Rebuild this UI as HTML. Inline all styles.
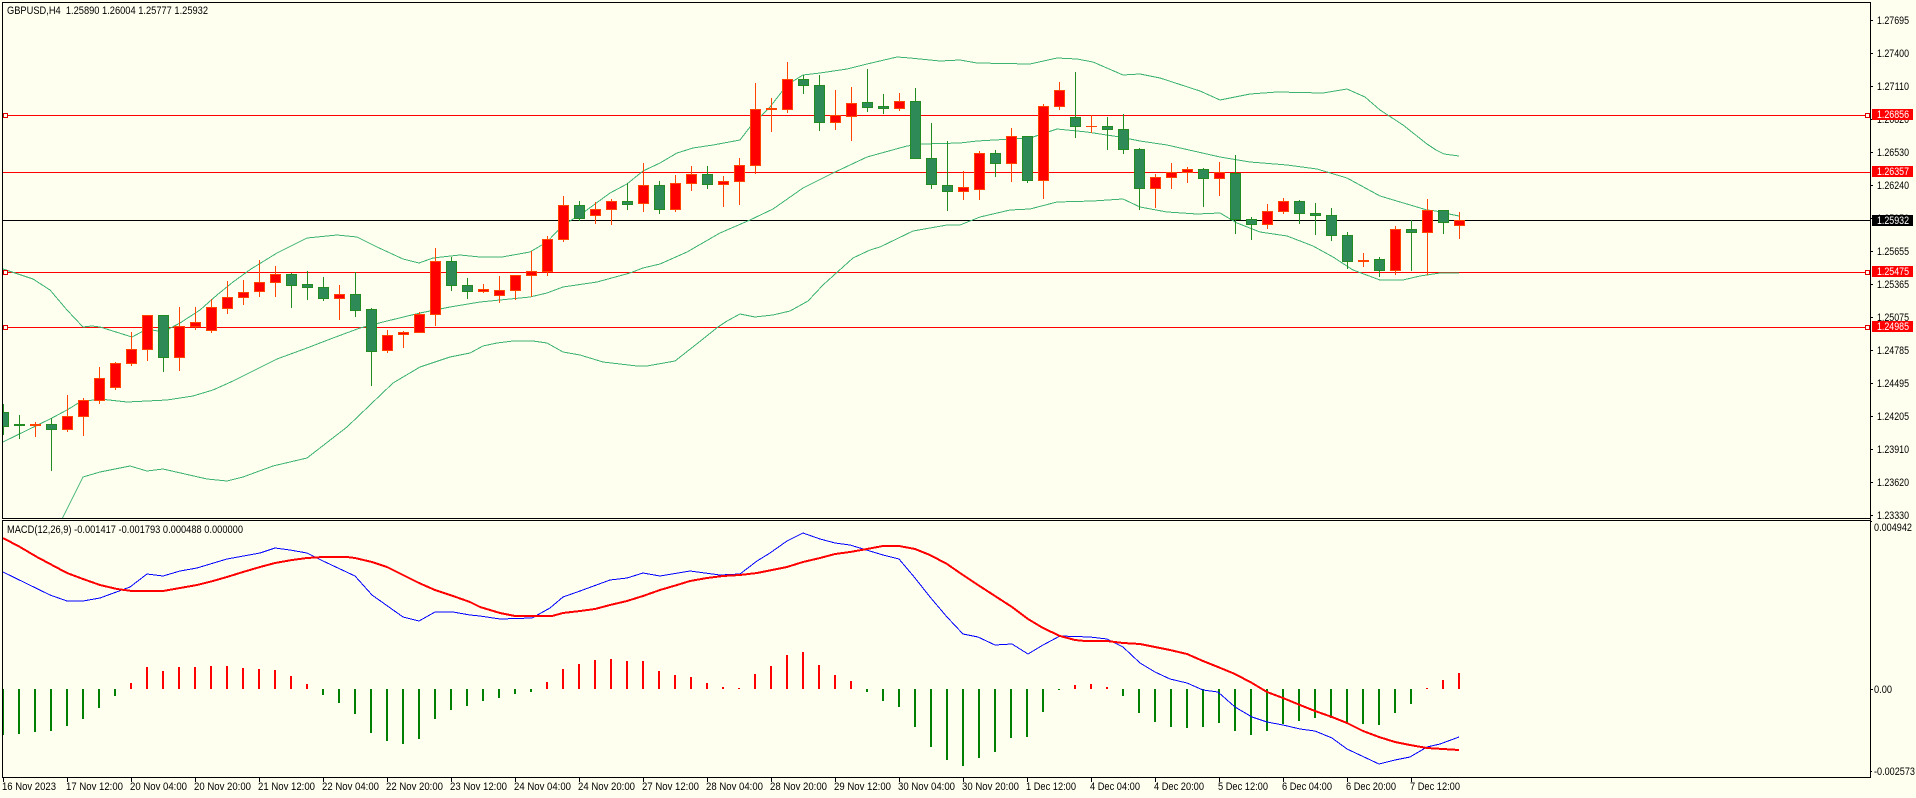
<!DOCTYPE html>
<html><head><meta charset="utf-8"><title>GBPUSD,H4</title>
<style>
html,body{margin:0;padding:0;background:#fffff0;width:1916px;height:798px;overflow:hidden}
svg{display:block}
text{font-family:"Liberation Sans",sans-serif;font-size:11px;fill:#000;white-space:pre}
.w{fill:#fff}
</style></head><body>
<svg width="1916" height="798" viewBox="0 0 1916 798" xmlns="http://www.w3.org/2000/svg" lengthAdjust="spacingAndGlyphs">
<defs><clipPath id="m"><rect x="3" y="3" width="1867" height="515"/></clipPath><clipPath id="n"><rect x="3" y="521" width="1867" height="256"/></clipPath></defs>
<rect width="1916" height="798" fill="#fffff0"/>
<g shape-rendering="crispEdges" clip-path="url(#m)">
<path d="M3 115.5H1870M3 172.5H1870M3 272.5H1870M3 327.5H1870" stroke="#f00" fill="none"/>
<path d="M3 220.5H1870" stroke="#000" fill="none"/>
<g fill="none" stroke="#3cb371">
<polyline points="3,269 33,279 50,290 67,310 83,327 92,326 100,327 132,337 147,329 163,332 180,323 200,310 217,295 233,282 251,269 277,253 307,238 337,235 357,237 377,247 403,259 419,263 433,258 460,255 480,257 502,257 530,252 547,242 563,225 580,215 610,193 627,184 643,171 660,163 677,153 693,148 713,145 740,140 750,127 770,107 787,85 803,75 820,73 847,69 867,64 897,57 910,58 940,61 960,60 977,63 1030,64 1057,58 1077,59 1093,62 1123,75 1140,74 1160,78 1200,91 1220,100 1250,94 1277,92 1323,93 1347,89 1365,97 1380,110 1403,125 1427,144 1436,150 1444,154 1459,156"/>
<polyline points="3,442 50,419 67,410 80,402 100,399 127,402 167,400 193,396 213,390 233,381 277,359 307,348 333,338 360,328 383,322 420,313 450,307 480,302 530,297 547,293 563,287 597,282 630,273 643,268 660,264 687,252 720,233 750,220 773,209 803,188 833,173 867,157 907,146 923,144 960,143 977,141 1030,138 1057,129 1087,132 1120,137 1140,141 1167,145 1220,157 1250,162 1287,165 1317,169 1347,178 1380,196 1427,210 1436,211 1444,213 1459,216"/>
<polyline points="50,545 63,517 83,477 100,472 130,466 147,471 163,469 207,479 227,481 243,477 273,466 307,458 347,427 393,383 420,367 450,357 470,353 483,346 497,343 513,341 533,341 547,343 563,352 580,355 603,362 637,366 647,366 675,361 703,339 718,327 727,321 740,314 755,317 773,315 790,311 808,301 823,285 853,258 870,250 880,247 913,231 947,225 960,225 980,217 1010,210 1030,209 1057,202 1093,201 1123,199 1140,207 1167,212 1197,214 1220,213 1237,223 1260,232 1287,236 1313,246 1333,257 1353,270 1380,280 1403,280 1420,276 1440,273 1459,273"/>
</g>
<path fill="none" stroke="#228b22" d="M3.5 404V435M19.5 415V439M51.5 418V471M163.5 315V372M291.5 273V308M307.5 271V300M323.5 277V301M355.5 272V317M371.5 308V386M451.5 257V291M467.5 278V299M579.5 201V221M627.5 183V210M659.5 181V214M707.5 166V189M803.5 75V94M819.5 75V131M867.5 69V112M883.5 94V114M915.5 88V159M931.5 123V189M947.5 141V211M995.5 150V177M1027.5 136V183M1075.5 72V138M1107.5 117V150M1123.5 114V154M1139.5 148V210M1203.5 168V207M1235.5 155V234M1251.5 217V240M1299.5 200V224M1315.5 203V235M1331.5 208V241M1347.5 232V269M1379.5 257V277M1411.5 220V271M1443.5 210V234"/>
<path fill="#2e8b57" stroke="#228b22" d="M-1.5 412.5h10v14h-10zM14.5 424.5h10v1h-10zM46.5 424.5h10v5h-10zM158.5 315.5h10v42h-10zM286.5 274.5h10v11h-10zM302.5 284.5h10v3h-10zM318.5 287.5h10v11h-10zM350.5 294.5h10v16h-10zM366.5 309.5h10v42h-10zM446.5 261.5h10v24h-10zM462.5 285.5h10v6h-10zM574.5 205.5h10v13h-10zM622.5 201.5h10v3h-10zM654.5 185.5h10v24h-10zM702.5 174.5h10v10h-10zM798.5 79.5h10v6h-10zM814.5 85.5h10v37h-10zM862.5 102.5h10v5h-10zM878.5 106.5h10v2h-10zM910.5 101.5h10v57h-10zM926.5 158.5h10v26h-10zM942.5 185.5h10v6h-10zM990.5 153.5h10v10h-10zM1022.5 136.5h10v44h-10zM1070.5 117.5h10v9h-10zM1102.5 126.5h10v3h-10zM1118.5 129.5h10v20h-10zM1134.5 149.5h10v39h-10zM1198.5 169.5h10v9h-10zM1230.5 173.5h10v46h-10zM1246.5 219.5h10v5h-10zM1294.5 201.5h10v12h-10zM1310.5 213.5h10v2h-10zM1326.5 215.5h10v20h-10zM1342.5 235.5h10v26h-10zM1374.5 259.5h10v11h-10zM1406.5 229.5h10v3h-10zM1438.5 210.5h10v12h-10z"/>
<path fill="none" stroke="#ff4500" d="M35.5 422V437M67.5 395V432M83.5 398V436M99.5 367V404M115.5 362V390M131.5 332V366M147.5 315V361M179.5 307V371M195.5 307V330M211.5 299V333M227.5 281V314M243.5 280V305M259.5 260V297M275.5 266V297M339.5 285V320M387.5 330V353M403.5 331V348M419.5 312V333M435.5 248V326M483.5 284V293M499.5 276V303M515.5 275V300M531.5 251V297M547.5 236V276M563.5 196V242M595.5 202V224M611.5 199V225M643.5 163V212M675.5 175V212M691.5 166V191M723.5 176V207M739.5 158V205M755.5 83V174M771.5 98V132M787.5 62V113M835.5 90V130M851.5 87V141M899.5 93V111M963.5 171V200M979.5 151V200M1011.5 128V182M1043.5 104V199M1059.5 82V110M1091.5 115V133M1155.5 174V208M1171.5 163V189M1187.5 167V183M1219.5 162V196M1267.5 204V229M1283.5 198V214M1363.5 253V267M1395.5 226V275M1427.5 199V275M1459.5 212V239M1086 126.5H1097"/>
<path fill="#f00" stroke="#ff4500" d="M30.5 424.5h10v1h-10zM62.5 416.5h10v13h-10zM78.5 400.5h10v16h-10zM94.5 378.5h10v22h-10zM110.5 363.5h10v24h-10zM126.5 349.5h10v14h-10zM142.5 315.5h10v34h-10zM174.5 326.5h10v31h-10zM190.5 322.5h10v4h-10zM206.5 307.5h10v23h-10zM222.5 297.5h10v11h-10zM238.5 292.5h10v5h-10zM254.5 282.5h10v9h-10zM270.5 274.5h10v8h-10zM334.5 294.5h10v4h-10zM382.5 335.5h10v15h-10zM398.5 332.5h10v2h-10zM414.5 314.5h10v18h-10zM430.5 261.5h10v53h-10zM478.5 289.5h10v2h-10zM494.5 290.5h10v5h-10zM510.5 275.5h10v15h-10zM526.5 271.5h10v4h-10zM542.5 239.5h10v32h-10zM558.5 205.5h10v34h-10zM590.5 209.5h10v6h-10zM606.5 201.5h10v8h-10zM638.5 185.5h10v18h-10zM670.5 183.5h10v26h-10zM686.5 174.5h10v9h-10zM718.5 181.5h10v3h-10zM734.5 165.5h10v16h-10zM750.5 109.5h10v56h-10zM766.5 108.5h10v1h-10zM782.5 79.5h10v30h-10zM830.5 115.5h10v7h-10zM846.5 103.5h10v13h-10zM894.5 101.5h10v7h-10zM958.5 187.5h10v4h-10zM974.5 153.5h10v36h-10zM1006.5 136.5h10v27h-10zM1038.5 106.5h10v74h-10zM1054.5 90.5h10v16h-10zM1150.5 177.5h10v11h-10zM1166.5 172.5h10v5h-10zM1182.5 169.5h10v3h-10zM1214.5 172.5h10v6h-10zM1262.5 211.5h10v13h-10zM1278.5 201.5h10v10h-10zM1358.5 260.5h10v1h-10zM1390.5 229.5h10v41h-10zM1422.5 210.5h10v22h-10zM1454.5 220.5h10v5h-10z"/>
</g>
<g shape-rendering="crispEdges">
<rect x="3.5" y="113.5" width="4" height="4" fill="#fffff0" stroke="#e00000"/>
<rect x="3.5" y="270.5" width="4" height="4" fill="#fffff0" stroke="#e00000"/>
<rect x="3.5" y="325.5" width="4" height="4" fill="#fffff0" stroke="#e00000"/>
<rect x="1865.5" y="113.5" width="4" height="4" fill="#fffff0" stroke="#e00000"/>
<rect x="1865.5" y="270.5" width="4" height="4" fill="#fffff0" stroke="#e00000"/>
<rect x="1865.5" y="325.5" width="4" height="4" fill="#fffff0" stroke="#e00000"/>
</g>
<g shape-rendering="crispEdges" clip-path="url(#n)">
<path fill="none" stroke="#008000" stroke-width="2" d="M3 689V735M19 689V734M35 689V732M51 689V731M67 689V726M83 689V719M99 689V708M115 689V696M323 689V695M339 689V703M355 689V714M371 689V733M387 689V741M403 689V744M419 689V739M435 689V719M451 689V710M467 689V706M483 689V701M499 689V698M515 689V694M531 689V692M867 689V692M883 689V701M899 689V707M915 689V727M931 689V747M947 689V760M963 689V766M979 689V758M995 689V752M1011 689V738M1027 689V737M1043 689V712M1059 689V690M1123 689V696M1139 689V713M1155 689V722M1171 689V727M1187 689V728M1203 689V727M1219 689V723M1235 689V731M1251 689V735M1267 689V731M1283 689V724M1299 689V721M1315 689V718M1331 689V718M1347 689V724M1363 689V724M1379 689V725M1395 689V713M1411 689V704"/>
<path fill="none" stroke="#f00" stroke-width="2" d="M131 689V683M147 689V667M163 689V671M179 689V667M195 689V667M211 689V666M227 689V666M243 689V668M259 689V669M275 689V670M291 689V676M307 689V684M547 689V682M563 689V669M579 689V664M595 689V660M611 689V659M627 689V661M643 689V661M659 689V671M675 689V675M691 689V677M707 689V683M723 689V687M739 689V688M755 689V674M771 689V666M787 689V655M803 689V652M819 689V665M835 689V675M851 689V681M1075 689V685M1091 689V684M1107 689V687M1427 689V688M1443 689V680M1459 689V673"/>
<polyline fill="none" stroke="#00f" points="3,572 50,595 67,601 83,601 100,598 130,587 147,574 163,576 180,571 197,568 227,559 260,553 275,548 290,550 307,553 323,561 355,576 372,595 403,617 419,621 435,612 453,612 470,615 480,616 500,619 532,618 550,608 563,597 580,591 610,580 627,578 643,573 660,576 690,571 720,575 740,574 757,561 770,553 787,541 803,533 820,539 835,543 850,545 883,555 899,559 915,578 930,597 947,617 963,634 978,637 995,645 1012,644 1028,654 1043,645 1060,636 1090,637 1107,639 1123,647 1140,663 1155,672 1170,679 1187,683 1203,690 1218,692 1235,707 1252,717 1267,722 1283,725 1300,729 1315,731 1332,738 1347,749 1379,764 1395,760 1410,757 1427,747 1440,744 1459,737"/>
<polyline fill="none" stroke="#f00" stroke-width="2" points="3,538 20,547 37,557 52,565 67,573 83,579 100,585 117,589 132,591 163,591 180,588 197,585 213,581 227,577 243,572 260,567 275,563 292,560 307,558 323,557 347,557 355,558 372,562 387,567 403,575 419,583 435,590 453,596 470,602 480,607 500,613 515,616 552,616 563,613 580,611 595,609 610,605 627,601 643,596 660,590 677,585 690,581 707,578 723,576 740,575 757,573 772,570 787,567 803,562 820,558 835,554 850,552 867,549 883,546 899,546 915,549 930,555 947,564 960,573 978,585 995,596 1012,607 1028,619 1043,628 1060,636 1075,640 1085,641 1107,641 1123,643 1140,644 1155,647 1170,650 1187,654 1203,661 1218,667 1235,674 1252,683 1267,692 1283,698 1300,705 1315,711 1332,717 1347,723 1363,731 1379,737 1395,742 1410,745 1427,748 1443,749 1459,750"/>
</g>
<g shape-rendering="crispEdges" fill="none" stroke="#000">
<path d="M2 2.5H1871M2.5 2V519M1870.5 2V520M2 518.5H1871M2 520.5H1871M2.5 520V778M1870.5 520V778M2 777.5H1871"/>
<path d="M1871 20.5h2M1871 53.5h2M1871 86.5h2M1871 119.5h2M1871 152.5h2M1871 185.5h2M1871 218.5h2M1871 251.5h2M1871 284.5h2M1871 317.5h2M1871 350.5h2M1871 383.5h2M1871 416.5h2M1871 449.5h2M1871 482.5h2M1871 515.5h2M1871 689.5h2M1871 521.5h1M1871 771.5h1"/>
<path d="M3.5 778v4M67.5 778v4M131.5 778v4M195.5 778v4M259.5 778v4M323.5 778v4M387.5 778v4M451.5 778v4M515.5 778v4M579.5 778v4M643.5 778v4M707.5 778v4M771.5 778v4M835.5 778v4M899.5 778v4M963.5 778v4M1027.5 778v4M1091.5 778v4M1155.5 778v4M1219.5 778v4M1283.5 778v4M1347.5 778v4M1411.5 778v4"/>
</g>
<text x="7" y="14" textLength="201" lengthAdjust="spacingAndGlyphs">GBPUSD,H4  1.25890 1.26004 1.25777 1.25932</text>
<text x="7" y="533" textLength="236" lengthAdjust="spacingAndGlyphs">MACD(12,26,9) -0.001417 -0.001793 0.000488 0.000000</text>
<g>
<text x="1877" y="24" textLength="32" lengthAdjust="spacingAndGlyphs">1.27695</text>
<text x="1877" y="57" textLength="32" lengthAdjust="spacingAndGlyphs">1.27400</text>
<text x="1877" y="90" textLength="32" lengthAdjust="spacingAndGlyphs">1.27110</text>
<text x="1877" y="123" textLength="32" lengthAdjust="spacingAndGlyphs">1.26820</text>
<text x="1877" y="156" textLength="32" lengthAdjust="spacingAndGlyphs">1.26530</text>
<text x="1877" y="189" textLength="32" lengthAdjust="spacingAndGlyphs">1.26240</text>
<text x="1877" y="222" textLength="32" lengthAdjust="spacingAndGlyphs">1.25950</text>
<text x="1877" y="255" textLength="32" lengthAdjust="spacingAndGlyphs">1.25655</text>
<text x="1877" y="288" textLength="32" lengthAdjust="spacingAndGlyphs">1.25365</text>
<text x="1877" y="321" textLength="32" lengthAdjust="spacingAndGlyphs">1.25075</text>
<text x="1877" y="354" textLength="32" lengthAdjust="spacingAndGlyphs">1.24785</text>
<text x="1877" y="387" textLength="32" lengthAdjust="spacingAndGlyphs">1.24495</text>
<text x="1877" y="420" textLength="32" lengthAdjust="spacingAndGlyphs">1.24205</text>
<text x="1877" y="453" textLength="32" lengthAdjust="spacingAndGlyphs">1.23910</text>
<text x="1877" y="486" textLength="32" lengthAdjust="spacingAndGlyphs">1.23620</text>
<text x="1877" y="519" textLength="32" lengthAdjust="spacingAndGlyphs">1.23330</text>
<text x="1874" y="531" textLength="38" lengthAdjust="spacingAndGlyphs">0.004942</text>
<text x="1874" y="693" textLength="18" lengthAdjust="spacingAndGlyphs">0.00</text>
<text x="1874" y="775" textLength="41" lengthAdjust="spacingAndGlyphs">-0.002573</text>
</g>
<g shape-rendering="crispEdges">
<rect x="1872" y="109" width="41" height="11" fill="#f00"/>
<rect x="1872" y="166" width="41" height="11" fill="#f00"/>
<rect x="1872" y="215" width="41" height="11" fill="#000"/>
<rect x="1872" y="266" width="41" height="11" fill="#f00"/>
<rect x="1872" y="321" width="41" height="11" fill="#f00"/>
</g>
<text class="w" x="1877" y="118" textLength="32" lengthAdjust="spacingAndGlyphs">1.26856</text>
<text class="w" x="1877" y="175" textLength="32" lengthAdjust="spacingAndGlyphs">1.26357</text>
<text class="w" x="1877" y="224" textLength="32" lengthAdjust="spacingAndGlyphs">1.25932</text>
<text class="w" x="1877" y="275" textLength="32" lengthAdjust="spacingAndGlyphs">1.25475</text>
<text class="w" x="1877" y="330" textLength="32" lengthAdjust="spacingAndGlyphs">1.24985</text>
<g>
<text x="2" y="790" textLength="54" lengthAdjust="spacingAndGlyphs">16 Nov 2023</text>
<text x="66" y="790" textLength="57" lengthAdjust="spacingAndGlyphs">17 Nov 12:00</text>
<text x="130" y="790" textLength="57" lengthAdjust="spacingAndGlyphs">20 Nov 04:00</text>
<text x="194" y="790" textLength="57" lengthAdjust="spacingAndGlyphs">20 Nov 20:00</text>
<text x="258" y="790" textLength="57" lengthAdjust="spacingAndGlyphs">21 Nov 12:00</text>
<text x="322" y="790" textLength="57" lengthAdjust="spacingAndGlyphs">22 Nov 04:00</text>
<text x="386" y="790" textLength="57" lengthAdjust="spacingAndGlyphs">22 Nov 20:00</text>
<text x="450" y="790" textLength="57" lengthAdjust="spacingAndGlyphs">23 Nov 12:00</text>
<text x="514" y="790" textLength="57" lengthAdjust="spacingAndGlyphs">24 Nov 04:00</text>
<text x="578" y="790" textLength="57" lengthAdjust="spacingAndGlyphs">24 Nov 20:00</text>
<text x="642" y="790" textLength="57" lengthAdjust="spacingAndGlyphs">27 Nov 12:00</text>
<text x="706" y="790" textLength="57" lengthAdjust="spacingAndGlyphs">28 Nov 04:00</text>
<text x="770" y="790" textLength="57" lengthAdjust="spacingAndGlyphs">28 Nov 20:00</text>
<text x="834" y="790" textLength="57" lengthAdjust="spacingAndGlyphs">29 Nov 12:00</text>
<text x="898" y="790" textLength="57" lengthAdjust="spacingAndGlyphs">30 Nov 04:00</text>
<text x="962" y="790" textLength="57" lengthAdjust="spacingAndGlyphs">30 Nov 20:00</text>
<text x="1026" y="790" textLength="50" lengthAdjust="spacingAndGlyphs">1 Dec 12:00</text>
<text x="1090" y="790" textLength="50" lengthAdjust="spacingAndGlyphs">4 Dec 04:00</text>
<text x="1154" y="790" textLength="50" lengthAdjust="spacingAndGlyphs">4 Dec 20:00</text>
<text x="1218" y="790" textLength="50" lengthAdjust="spacingAndGlyphs">5 Dec 12:00</text>
<text x="1282" y="790" textLength="50" lengthAdjust="spacingAndGlyphs">6 Dec 04:00</text>
<text x="1346" y="790" textLength="50" lengthAdjust="spacingAndGlyphs">6 Dec 20:00</text>
<text x="1410" y="790" textLength="50" lengthAdjust="spacingAndGlyphs">7 Dec 12:00</text>
</g>
</svg>
</body></html>
